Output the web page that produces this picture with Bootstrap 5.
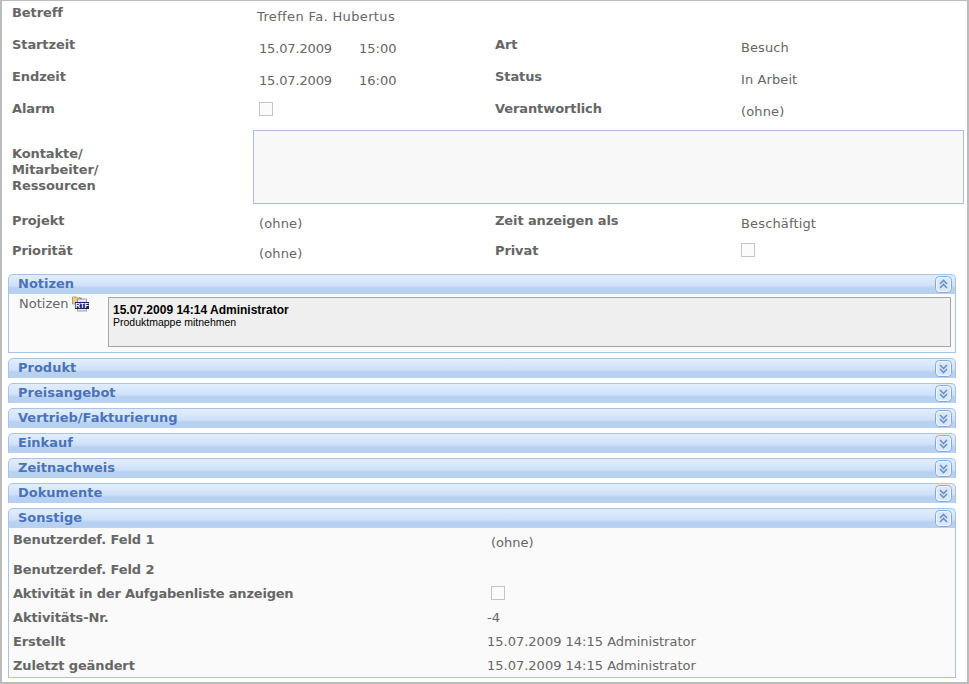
<!DOCTYPE html>
<html lang="de"><head><meta charset="utf-8"><title>Aktivität</title>
<link href="https://cdn.jsdelivr.net/npm/bootstrap@5.3.0/dist/css/bootstrap.min.css" rel="stylesheet">
<style>
html,body{height:100%;background:#fff}
body{font-family:"DejaVu Sans",Verdana,sans-serif;font-size:13px;line-height:16px;color:#666;overflow:hidden}
.frame{width:969px;height:684px;border:solid #bcbcbc;border-width:1px 2px 2px 2px;padding:4px 8px 0 5px;box-sizing:border-box}
.frow{display:flex}
.lab{font-weight:700;color:#666;margin:0;letter-spacing:-.1px}
.c1{width:245px;padding-left:5px;flex:none}
.c2{width:243px;flex:none;padding-top:4px;padding-left:7px}
.c2a{padding:4px 0 0 5px;letter-spacing:.36px;width:auto}
.c3{width:246px;flex:none}
.c4{flex:1;padding-top:4px}
.c4u{padding-top:3px;letter-spacing:.1px}
.c4w{letter-spacing:.15px;padding-top:3px}
.h32{height:32px}
.h30{height:30px}
.h31{height:31px}
.tv{display:inline-block;width:100px;letter-spacing:-.15px}
.cb{display:block;width:14px;height:14px;border:1px solid #c4c4c4;background:#fbfbfb;margin-top:-3px}
.cbox{height:74px;margin-top:-3px;margin-bottom:9px}
.pick{width:711px;flex:none;height:74px;border:1px solid #a8c0e0;background:#f8f8f8;margin-left:1px}
.c1l{padding-top:16px}
.panel-x{margin:0 0 5px 1px;width:948px}
.phead{height:20px;border:1px solid #a9c3e4;border-bottom:0;border-radius:5px 5px 0 0;background:linear-gradient(#e2eefd 0,#cfe1fa 55%,#b9d1f1 68%,#b9d1f1 100%);display:flex;align-items:center;justify-content:space-between;padding:0 3px 0 9px}
.ptitle{font-weight:700;color:#4a73b8;font-size:13px;letter-spacing:0;padding-bottom:2px}
.tog{display:block;width:17px;height:17px}
.pbody{border:1px solid #a9c3e4;border-top:0;background:#fafafa}
.nbody{height:59px;display:flex;padding:3px 4px 0 10px}
.nlab{width:89px;flex:none;display:flex;align-items:flex-start;margin-top:-1px}
.rtf{margin-left:4px}
.notebox{flex:1;height:50px;border:1px solid #a6a6a6;background:#efefef;padding:6px 4px 0;font-family:"Liberation Sans",Arial,sans-serif;color:#000;font-size:10.5px;line-height:11px}
.notebox b{display:block;font-size:12px;line-height:13px}
.sbody{height:150px;padding:0 0 0 4px}
.s1{width:474px;flex:none}
.srow{height:24px;padding-top:2px}
.srow-end{height:22px}
.tight{letter-spacing:-.2px}
.sh1{height:30px;padding-top:4px}
.sh2{height:24px;padding-top:4px}
.sh3{height:26px;padding-top:4px}
.sv1{padding:3px 0 0 4px}
.sv3{padding:0 0 0 4px}
.sv3 .cb{margin-top:0}
.chev{fill:none;stroke:#6a92c9;stroke-width:1.6}
</style></head><body>
<div class="frame">
  <div class="frow h32">
    <p class="lab c1">Betreff</p><div class="c2 c2a">Treffen Fa. Hubertus</div>
  </div>
  <div class="frow h32">
    <p class="lab c1">Startzeit</p><div class="c2"><span class="tv">15.07.2009</span>15:00</div>
    <p class="lab c3">Art</p><div class="c4 c4u">Besuch</div>
  </div>
  <div class="frow h32">
    <p class="lab c1">Endzeit</p><div class="c2"><span class="tv">15.07.2009</span>16:00</div>
    <p class="lab c3">Status</p><div class="c4 c4u">In Arbeit</div>
  </div>
  <div class="frow h32">
    <p class="lab c1">Alarm</p><div class="c2"><span class="cb"></span></div>
    <p class="lab c3">Verantwortlich</p><div class="c4 c4w">(ohne)</div>
  </div>
  <div class="frow cbox">
    <p class="lab c1 c1l">Kontakte/<br>Mitarbeiter/<br>Ressourcen</p><div class="pick"></div>
  </div>
  <div class="frow h30">
    <p class="lab c1">Projekt</p><div class="c2 c4w">(ohne)</div>
    <p class="lab c3">Zeit anzeigen als</p><div class="c4 c4w">Beschäftigt</div>
  </div>
  <div class="frow h31">
    <p class="lab c1">Priorität</p><div class="c2 c4w">(ohne)</div>
    <p class="lab c3">Privat</p><div class="c4 c4w"><span class="cb"></span></div>
  </div>

  <svg width="0" height="0" class="d-block">
    <defs>
      <g id="btn"><rect x=".5" y=".5" width="16" height="16" rx="4" fill="#d9e7fa" stroke="#86a6d3"/><rect x="1.5" y="1.5" width="14" height="14" rx="3" fill="none" stroke="#eff6ff"/></g>
    </defs>
  </svg>

  <section class="panel-x">
    <div class="phead"><span class="ptitle">Notizen</span><svg class="tog" viewBox="0 0 17 17"><use href="#btn"/><path class="chev" d="M5 8l3.5-3.5L12 8M5 12l3.5-3.5L12 12"/></svg></div>
    <div class="pbody nbody">
      <div class="nlab"><span>Notizen</span>
        <svg class="rtf" width="17" height="16" viewBox="0 0 17 16"><path d="M.5 1h4l1 1h4v6H.5z" fill="#e8cd84" stroke="#a8904c" stroke-width=".8"/><path d="M5 3.500h4M7.500 1.500l2 2-2 2" fill="none" stroke="#3f7fd8" stroke-width="1"/><rect x="5.500" y="3" width="9" height="12" fill="#e6e6e6" stroke="#8f8f8f" stroke-width=".8"/><rect x="3" y="6" width="14" height="7" fill="#1b2258"/><text x="10" y="12" text-anchor="middle" font-family="Liberation Sans,sans-serif" font-size="7" font-weight="700" fill="#fff">RTF</text></svg>
      </div>
      <div class="notebox"><b>15.07.2009 14:14 Administrator</b>Produktmappe mitnehmen</div>
    </div>
  </section>

  <section class="panel-x"><div class="phead"><span class="ptitle">Produkt</span><svg class="tog" viewBox="0 0 17 17"><use href="#btn"/><path class="chev" d="M5 5l3.5 3.5L12 5M5 9l3.5 3.5L12 9"/></svg></div></section>
  <section class="panel-x"><div class="phead"><span class="ptitle">Preisangebot</span><svg class="tog" viewBox="0 0 17 17"><use href="#btn"/><path class="chev" d="M5 5l3.5 3.5L12 5M5 9l3.5 3.5L12 9"/></svg></div></section>
  <section class="panel-x"><div class="phead"><span class="ptitle">Vertrieb/Fakturierung</span><svg class="tog" viewBox="0 0 17 17"><use href="#btn"/><path class="chev" d="M5 5l3.5 3.5L12 5M5 9l3.5 3.5L12 9"/></svg></div></section>
  <section class="panel-x"><div class="phead"><span class="ptitle">Einkauf</span><svg class="tog" viewBox="0 0 17 17"><use href="#btn"/><path class="chev" d="M5 5l3.5 3.5L12 5M5 9l3.5 3.5L12 9"/></svg></div></section>
  <section class="panel-x"><div class="phead"><span class="ptitle">Zeitnachweis</span><svg class="tog" viewBox="0 0 17 17"><use href="#btn"/><path class="chev" d="M5 5l3.5 3.5L12 5M5 9l3.5 3.5L12 9"/></svg></div></section>
  <section class="panel-x"><div class="phead"><span class="ptitle">Dokumente</span><svg class="tog" viewBox="0 0 17 17"><use href="#btn"/><path class="chev" d="M5 5l3.5 3.5L12 5M5 9l3.5 3.5L12 9"/></svg></div></section>

  <section class="panel-x">
    <div class="phead"><span class="ptitle">Sonstige</span><svg class="tog" viewBox="0 0 17 17"><use href="#btn"/><path class="chev" d="M5 8l3.5-3.5L12 8M5 12l3.5-3.5L12 12"/></svg></div>
    <div class="pbody sbody">
      <div class="frow sh1"><p class="lab s1">Benutzerdef. Feld 1</p><div class="sv1">(ohne)</div></div>
      <div class="frow sh2"><p class="lab s1">Benutzerdef. Feld 2</p></div>
      <div class="frow sh3"><p class="lab s1 tight">Aktivität in der Aufgabenliste anzeigen</p><div class="sv3"><span class="cb"></span></div></div>
      <div class="frow srow"><p class="lab s1">Aktivitäts-Nr.</p><div>-4</div></div>
      <div class="frow srow"><p class="lab s1">Erstellt</p><div>15.07.2009 14:15 Administrator</div></div>
      <div class="frow srow srow-end"><p class="lab s1">Zuletzt geändert</p><div>15.07.2009 14:15 Administrator</div></div>
    </div>
  </section>
</div>
<script src="https://cdn.jsdelivr.net/npm/bootstrap@5.3.0/dist/js/bootstrap.bundle.min.js"></script>
</body></html>
